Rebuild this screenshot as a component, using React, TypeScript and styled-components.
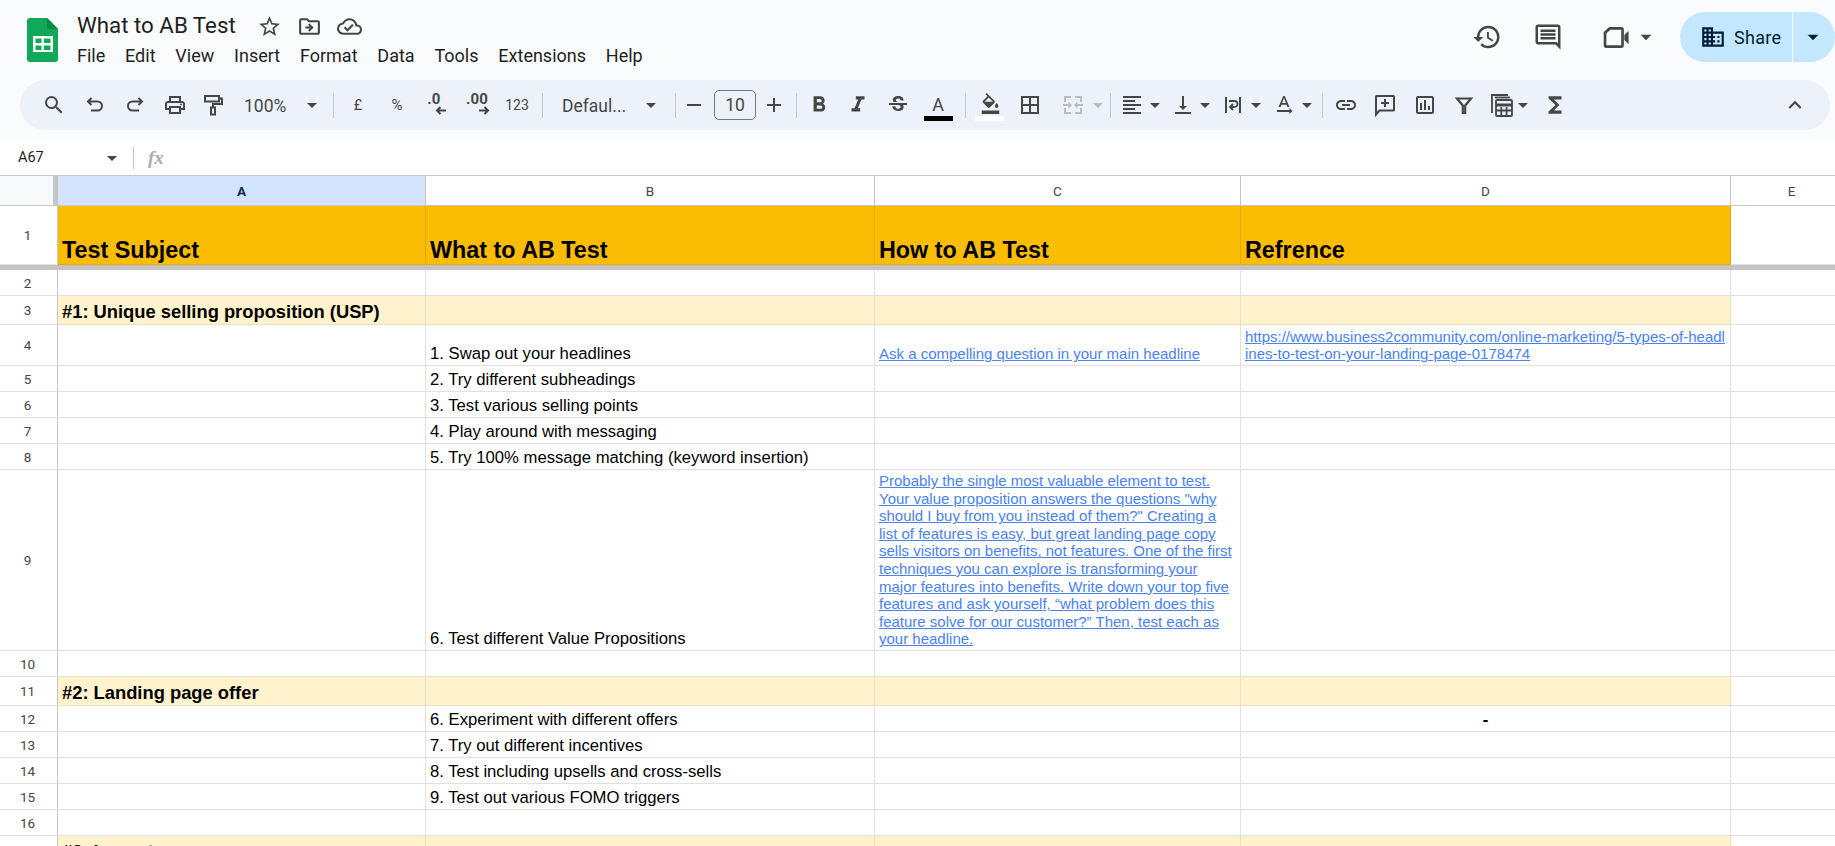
import React from "react";
import styled, { createGlobalStyle } from "styled-components";
import {
  MdSearch, MdOutlinePrint, MdArrowDropDown, MdRemove, MdAdd,
  MdFormatBold, MdFormatItalic, MdStrikethroughS, MdFormatColorFill, MdBorderAll, MdFormatAlignLeft,
  MdVerticalAlignBottom, MdTextRotationNone, MdLink, MdOutlineInsertChart, MdFunctions, MdKeyboardArrowUp,
  MdHistory, MdOutlineComment, MdDomain, MdStarBorder, MdOutlineDriveFileMove, MdOutlineCloudDone,
} from "react-icons/md";

const GlobalStyle = createGlobalStyle`
  html, body { margin: 0; padding: 0; height: 846px; overflow: hidden; background: #fff; }
  * { box-sizing: border-box; }
  body { font-family: Roboto, "Liberation Sans", sans-serif; }
`;

const Page = styled.div`
  width: 1835px;
  height: 846px;
  overflow: hidden;
  display: flex;
  flex-direction: column;
`;

/* ---------- header ---------- */
const Header = styled.header`
  height: 80px;
  flex: none;
  background: #f9fbfd;
  display: flex;
  padding-left: 27px;
`;
const LogoBox = styled.div`
  margin-top: 18px;
  margin-right: 19px;
  width: 31px;
  height: 44px;
`;
const TitleBlock = styled.div`
  padding-top: 10px;
  display: flex;
  flex-direction: column;
`;
const TitleRow = styled.div`
  height: 30px;
  display: flex;
  align-items: center;
`;
const Title = styled.div`
  font-size: 22.3px;
  color: #1f1f1f;
  width: 172px;
`;
const TitleIcon = styled.span`
  width: 40px;
  margin-top: 3px;
  display: flex;
  justify-content: center;
  color: #444746;
  font-size: 25px;
`;
const MenuRow = styled.nav`
  height: 30px;
  display: flex;
  align-items: center;
  gap: 19.8px;
  font-size: 18px;
  color: #1f1f1f;
`;
const Actions = styled.div`
  margin-left: auto;
  margin-top: 12px;
  height: 50px;
  display: flex;
  align-items: center;
`;
const ActionIcon = styled.span<{ $w: number; $ml: number; $size: number }>`
  width: ${(p) => p.$w}px;
  margin-left: ${(p) => p.$ml}px;
  display: flex;
  justify-content: center;
  color: #444746;
  font-size: ${(p) => p.$size}px;
  & > svg { flex: none; }
`;
const SharePill = styled.div`
  margin-left: 26px;
  width: 155px;
  height: 50px;
  border-radius: 25px;
  background: #c2e7ff;
  display: flex;
  color: #001d35;
  overflow: hidden;
`;
const SharePrimary = styled.div`
  width: 113px;
  padding-left: 20px;
  display: flex;
  align-items: center;
  gap: 8px;
  font-size: 18px;
  letter-spacing: 0.3px;
  border-right: 1px solid #f9fbfd;
`;
const ShareCaret = styled.div`
  flex: 1;
  display: flex;
  align-items: center;
  justify-content: center;
  padding-right: 2px;
  font-size: 26px;
`;

/* ---------- toolbar ---------- */
const ToolbarWrap = styled.div`
  height: 60px;
  flex: none;
  background: #f9fbfd;
  padding: 0 5px 10px 20px;
`;
const Toolbar = styled.div`
  height: 50px;
  background: #edf2fa;
  border-radius: 25px;
  display: flex;
  align-items: center;
  padding-left: 13px;
  color: #444746;
`;
const Tool = styled.span<{ $w: number; $ml?: number; $size?: number; $off?: boolean }>`
  flex: none;
  width: ${(p) => p.$w}px;
  margin-left: ${(p) => p.$ml ?? 0}px;
  height: 30px;
  display: flex;
  align-items: center;
  justify-content: center;
  font-size: ${(p) => p.$size ?? 24}px;
  color: ${(p) => (p.$off ? "#b9bdc1" : "#444746")};
  & > svg { flex: none; }
`;
const Sep = styled.span<{ $l: number; $r?: number }>`
  flex: none;
  width: 1px;
  height: 25px;
  background: #c7c7c7;
  margin-left: ${(p) => p.$l}px;
  margin-right: ${(p) => p.$r ?? 0}px;
`;
const SelectTool = styled.span<{ $w: number; $pl: number; $text: number }>`
  flex: none;
  width: ${(p) => p.$w}px;
  padding-left: ${(p) => p.$pl}px;
  display: flex;
  align-items: center;
  font-size: 17.5px;
  & > b { font-weight: 400; flex: none; padding-top: 1px; width: ${(p) => p.$text}px; white-space: nowrap; }
  & > svg { font-size: 24px; flex: none; }
`;
const Decimal = styled.span<{ $w: number; $shift: number }>`
  flex: none;
  width: ${(p) => p.$w}px;
  height: 30px;
  display: flex;
  flex-direction: column;
  align-items: center;
  font-weight: 700;
  font-size: 15px;
  line-height: 15px;
  padding-top: 2px;
  letter-spacing: 0.2px;
  & > svg { margin-left: ${(p) => p.$shift}px; margin-top: -1px; }
`;
const FontSize = styled.span`
  flex: none;
  width: 42px;
  height: 30px;
  margin-left: 2px;
  border: 1px solid #747775;
  border-radius: 5px;
  display: flex;
  align-items: center;
  justify-content: center;
  font-size: 17.5px;
`;
const ColorTool = styled.span<{ $w: number; $bar: string }>`
  flex: none;
  width: ${(p) => p.$w}px;
  height: 32px;
  display: flex;
  flex-direction: column;
  align-items: center;
  justify-content: flex-end;
  &::after {
    content: "";
    flex: none;
    width: 29px;
    height: 5px;
    background: ${(p) => p.$bar};
    margin-top: 2px;
  }
`;
const ColorA = styled.span`
  font-size: 18px;
  line-height: 18px;
  height: 18px;
`;
const FillIcon = styled.span`
  height: 21px;
  font-size: 21px;
  margin-left: 2px;
  display: flex;
`;

/* ---------- formula bar ---------- */
const FormulaBar = styled.div`
  height: 35px;
  flex: none;
  background: #fff;
  display: flex;
  align-items: center;
  color: #1f1f1f;
`;
const NameBox = styled.div`
  width: 133px;
  padding-left: 18px;
  padding-right: 9px;
  display: flex;
  align-items: center;
  justify-content: space-between;
  font-size: 14.5px;
  color: #1f1f1f;
  & > svg { color: #444746; font-size: 24px; }
`;
const FormulaSep = styled.span`
  width: 1px;
  height: 22px;
  background: #c7c7c7;
`;
const Fx = styled.span`
  margin-left: 14px;
  font-family: "Liberation Serif", serif;
  font-style: italic;
  font-weight: 700;
  font-size: 19px;
  color: #a9acb0;
`;

/* ---------- sheet ---------- */
const Sheet = styled.div`
  flex: 1;
  overflow: hidden;
  border-top: 1px solid #c4c7c5;
  background: #fff;
  font-family: "Liberation Sans", Arial, sans-serif;
  color: #000;
`;
const Row = styled.div<{ $h: number }>`
  display: grid;
  grid-template-columns: 58px 368px 449px 366px 490px 122px;
  height: ${(p) => p.$h}px;
`;
const Corner = styled.div`
  background: #f8f9fa;
  border-right: 5px solid #c4c7c5;
  border-bottom: 1px solid #c4c7c5;
`;
const ColHead = styled.div<{ $on?: boolean }>`
  display: flex;
  align-items: center;
  justify-content: center;
  font-family: Roboto, sans-serif;
  font-size: 13.5px;
  font-weight: ${(p) => (p.$on ? 700 : 400)};
  color: ${(p) => (p.$on ? "#0b2a5e" : "#444746")};
  background: ${(p) => (p.$on ? "#d3e3fd" : "#fff")};
  border-right: 1px solid #c4c7c5;
  border-bottom: 1px solid #c4c7c5;
`;
const RowHead = styled.div`
  display: flex;
  align-items: center;
  justify-content: center;
  font-family: Roboto, sans-serif;
  font-size: 13.5px;
  color: #444746;
  border-right: 1px solid #c4c7c5;
  border-bottom: 1px solid #e1e1e1;
  padding-right: 2px;
`;
const Cell = styled.div<{ $kind?: "head" | "section" }>`
  display: flex;
  align-items: flex-end;
  min-width: 0;
  white-space: nowrap;
  padding: 0 4px ${(p) => (p.$kind === "section" ? 3 : p.$kind === "head" ? 1 : 2)}px 4px;
  font-size: ${(p) => (p.$kind === "head" ? 23.33 : p.$kind === "section" ? 18.33 : 16.67)}px;
  font-weight: ${(p) => (p.$kind ? 700 : 400)};
  line-height: ${(p) => (p.$kind === "head" ? 26 : 19)}px;
  background: ${(p) => (p.$kind === "head" ? "#fbbc04" : p.$kind === "section" ? "#fff2cc" : "#fff")};
  border-right: 1px solid ${(p) => (p.$kind === "head" ? "#e3aa0c" : p.$kind === "section" ? "#ecdfba" : "#e1e1e1")};
  border-bottom: 1px solid ${(p) => (p.$kind === "head" ? "#e3aa0c" : p.$kind === "section" ? "#ecdfba" : "#e1e1e1")};
`;
const CellText = styled.div``;
const Center = styled.div`
  width: 100%;
  text-align: center;
  font-weight: 700;
`;
const LinkText = styled.a`
  color: #4a82f0;
  text-decoration: underline;
  white-space: pre-line;
  display: block;
  font-size: 15px;
  line-height: 17.6px;
`;
const FreezeBar = styled.div`
  height: 5px;
  background: #c4c4c4;
`;

/* ---------- inline drawings ---------- */
const Logo = () => (
  <svg width="31" height="44" viewBox="0 0 31 44">
    <path d="M3 0H20L31 11V41a3 3 0 0 1-3 3H3a3 3 0 0 1-3-3V3a3 3 0 0 1 3-3z" fill="#0fa958" />
    <path d="M20 0L31 11H22a2 2 0 0 1-2-2z" fill="#0b8a48" />
    <path d="M6 18h20v16H6z" fill="#fff" />
    <path d="M8.500 20.500h6v4.500h-6zM17 20.500h6.500v4.500H17zM8.500 27.500h6V32h-6zM17 27.500h6.500V32H17z" fill="#0fa958" />
  </svg>
);
const Arrow = ({ dir }: { dir: "left" | "right" }) => (
  <svg width="11" height="9" viewBox="0 0 11 9" fill="none" stroke="#444746" strokeWidth="2">
    {dir === "left" ? <path d="M11 4.500H2M5.500 1L2 4.500 5.500 8" /> : <path d="M0 4.500h9M5.500 1L9 4.500 5.500 8" />}
  </svg>
);
const UndoIcon = () => (
  <svg width="24" height="24" viewBox="0 0 24 24" fill="none" stroke="currentColor" strokeWidth="2">
    <path d="M8.500 5L5 8.500 8.500 12" />
    <path d="M5 8.500h9.500a4.500 4.500 0 0 1 0 9H8" />
  </svg>
);
const RedoIcon = () => (
  <svg width="24" height="24" viewBox="0 0 24 24" fill="none" stroke="currentColor" strokeWidth="2">
    <path d="M15.500 5L19 8.500 15.500 12" />
    <path d="M19 8.500H9.500a4.500 4.500 0 0 0 0 9H16" />
  </svg>
);
const RollerIcon = () => (
  <svg width="24" height="24" viewBox="0 0 24 24" fill="none" stroke="currentColor" strokeWidth="2">
    <path d="M4 3h14v5.500H4z" />
    <path d="M18 5.500h3V11h-9v3.500" />
    <rect x="10" y="14.500" width="4" height="7" />
  </svg>
);
const VideoIcon = () => (
  <svg width="29" height="29" viewBox="0 0 24 24" fill="none" stroke="currentColor" strokeWidth="2.200">
    <path d="M6.500 4.500H16a1 1 0 0 1 1 1v13a1 1 0 0 1-1 1H3.500a1 1 0 0 1-1-1V8z" />
    <path d="M18.500 10l3.500-3.500v11L18.500 14z" fill="currentColor" stroke="none" />
  </svg>
);
const MergeIcon = () => (
  <svg width="24" height="24" viewBox="0 0 24 24" fill="currentColor">
    <path d="M3 3h7v2H5v4H3zM14 3h7v6h-2V5h-5zM3 15h2v4h5v2H3zM19 15h2v6h-7v-2h5z" />
    <path d="M2 11h5.500V8.500L11 12l-3.500 3.500V13H2zM22 11h-5.500V8.500L13 12l3.500 3.500V13H22z" />
  </svg>
);
const WrapIcon = () => (
  <svg width="24" height="24" viewBox="0 0 24 24" fill="none" stroke="currentColor" strokeWidth="2">
    <path d="M5 4v16M19 4v16" />
    <path d="M8 8h5.500a3 3 0 0 1 0 6H10" strokeWidth="1.800" />
    <path d="M12 11l-3 3 3 3" strokeWidth="1.800" />
  </svg>
);
const AddCommentIcon = () => (
  <svg width="24" height="24" viewBox="0 0 24 24" fill="none" stroke="currentColor" strokeWidth="2">
    <path d="M3.500 3h17a.5.500 0 0 1 .5.500V17a.5.500 0 0 1-.5.500H6.500L3 21.500V3.500a.5.500 0 0 1 .5-.5z" />
    <path d="M12 6v8M8 10h8" />
  </svg>
);
const FilterIcon = () => (
  <svg width="24" height="24" viewBox="0 0 24 24" fill="none" stroke="currentColor" strokeWidth="2.200">
    <path d="M5 5.500h14l-5.800 7V20h-2.400v-7.500z" />
  </svg>
);
const CalcIcon = () => (
  <svg width="26" height="26" viewBox="0 0 26 26" fill="none" stroke="currentColor" strokeWidth="1.800">
    <path d="M3 21V3h16" />
    <path d="M6 5.500h15" />
    <rect x="7" y="8" width="16" height="16" rx="1" />
    <path d="M7 13h16" strokeWidth="3" />
    <path d="M7 18.500h16M12.300 15v9M17.600 15v9" />
  </svg>
);

/* ---------- data ---------- */
type RowData = {
  n: string;
  h: number;
  kind?: "head" | "section";
  a?: string;
  b?: string;
  c?: string;
  d?: string;
  dash?: boolean;
};

const longC =
  'Probably the single most valuable element to test.\nYour value proposition answers the questions "why\nshould I buy from you instead of them?" Creating a\nlist of features is easy, but great landing page copy\nsells visitors on benefits, not features. One of the first\ntechniques you can explore is transforming your\nmajor features into benefits. Write down your top five\nfeatures and ask yourself, \u201cwhat problem does this\nfeature solve for our customer?\u201d Then, test each as\nyour headline.';

const rows: RowData[] = [
  { n: "2", h: 26 },
  { n: "3", h: 29, kind: "section", a: "#1: Unique selling proposition (USP)" },
  {
    n: "4",
    h: 41,
    b: "1. Swap out your headlines",
    c: "Ask a compelling question in your main headline",
    d: "https://www.business2community.com/online-marketing/5-types-of-headl\nines-to-test-on-your-landing-page-0178474",
  },
  { n: "5", h: 26, b: "2. Try different subheadings" },
  { n: "6", h: 26, b: "3. Test various selling points" },
  { n: "7", h: 26, b: "4. Play around with messaging" },
  { n: "8", h: 26, b: "5. Try 100% message matching (keyword insertion)" },
  { n: "9", h: 181, b: "6. Test different Value Propositions", c: longC },
  { n: "10", h: 26 },
  { n: "11", h: 29, kind: "section", a: "#2: Landing page offer" },
  { n: "12", h: 26, b: "6. Experiment with different offers", dash: true },
  { n: "13", h: 26, b: "7. Try out different incentives" },
  { n: "14", h: 26, b: "8. Test including upsells and cross-sells" },
  { n: "15", h: 26, b: "9. Test out various FOMO triggers" },
  { n: "16", h: 26 },
  { n: "17", h: 29, kind: "section", a: "#3: Layout" },
];

const menu = ["File", "Edit", "View", "Insert", "Format", "Data", "Tools", "Extensions", "Help"];
const headers = ["Test Subject", "What to AB Test", "How to AB Test", "Refrence"];

export default function App() {
  return (
    <Page>
      <GlobalStyle />
      <Header>
        <LogoBox>
          <Logo />
        </LogoBox>
        <TitleBlock>
          <TitleRow>
            <Title>What to AB Test</Title>
            <TitleIcon><MdStarBorder /></TitleIcon>
            <TitleIcon><MdOutlineDriveFileMove /></TitleIcon>
            <TitleIcon><MdOutlineCloudDone /></TitleIcon>
          </TitleRow>
          <MenuRow>
            {menu.map((m) => (
              <span key={m}>{m}</span>
            ))}
          </MenuRow>
        </TitleBlock>
        <Actions>
          <ActionIcon $w={30} $ml={0} $size={30}><MdHistory /></ActionIcon>
          <ActionIcon $w={30} $ml={31} $size={30}><MdOutlineComment /></ActionIcon>
          <ActionIcon $w={32} $ml={37} $size={29}><VideoIcon /></ActionIcon>
          <ActionIcon $w={16} $ml={6} $size={26}><MdArrowDropDown /></ActionIcon>
          <SharePill>
            <SharePrimary>
              <MdDomain size={26} />
              Share
            </SharePrimary>
            <ShareCaret><MdArrowDropDown /></ShareCaret>
          </SharePill>
        </Actions>
      </Header>

      <ToolbarWrap>
        <Toolbar>
          <Tool $w={41}><MdSearch /></Tool>
          <Tool $w={41}><UndoIcon /></Tool>
          <Tool $w={40}><RedoIcon /></Tool>
          <Tool $w={39}><MdOutlinePrint /></Tool>
          <Tool $w={38}><RollerIcon /></Tool>
          <SelectTool $w={93} $pl={12} $text={56}><b>100%</b><MdArrowDropDown /></SelectTool>
          <Sep $l={8} $r={8} />
          <Tool $w={32} $size={14.5}>£</Tool>
          <Tool $w={46} $size={15}>%</Tool>
          <Decimal $w={28} $shift={12}>.0<Arrow dir="left" /></Decimal>
          <Decimal $w={58} $shift={14}>.00<Arrow dir="right" /></Decimal>
          <Tool $w={22} $size={14}>123</Tool>
          <Sep $l={14} />
          <SelectTool $w={132} $pl={19} $text={77}><b>Defaul...</b><MdArrowDropDown /></SelectTool>
          <Sep $l={0} />
          <Tool $w={36}><MdRemove /></Tool>
          <FontSize>10</FontSize>
          <Tool $w={36}><MdAdd /></Tool>
          <Sep $l={4} />
          <Tool $w={44}><MdFormatBold size={26} /></Tool>
          <Tool $w={34}><MdFormatItalic size={26} /></Tool>
          <Tool $w={46}><MdStrikethroughS /></Tool>
          <ColorTool $w={34} $bar="#000"><ColorA>A</ColorA></ColorTool>
          <Sep $l={10} />
          <ColorTool $w={46} $bar="#fff"><FillIcon><MdFormatColorFill /></FillIcon></ColorTool>
          <Tool $w={36}><MdBorderAll /></Tool>
          <Tool $w={34} $ml={8} $off><MergeIcon /></Tool>
          <Tool $w={16} $off><MdArrowDropDown /></Tool>
          <Sep $l={4} />
          <Tool $w={24} $ml={9}><MdFormatAlignLeft /></Tool>
          <Tool $w={16} $ml={3}><MdArrowDropDown /></Tool>
          <Tool $w={24} $ml={8}><MdVerticalAlignBottom /></Tool>
          <Tool $w={16} $ml={2}><MdArrowDropDown /></Tool>
          <Tool $w={24} $ml={8}><WrapIcon /></Tool>
          <Tool $w={16} $ml={3}><MdArrowDropDown /></Tool>
          <Tool $w={24} $ml={8}><MdTextRotationNone /></Tool>
          <Tool $w={16} $ml={3}><MdArrowDropDown /></Tool>
          <Sep $l={7} />
          <Tool $w={46}><MdLink /></Tool>
          <Tool $w={32}><AddCommentIcon /></Tool>
          <Tool $w={48}><MdOutlineInsertChart /></Tool>
          <Tool $w={30}><FilterIcon /></Tool>
          <Tool $w={24} $ml={11}><CalcIcon /></Tool>
          <Tool $w={16} $ml={1}><MdArrowDropDown /></Tool>
          <Tool $w={24} $ml={12} $size={26}><MdFunctions /></Tool>
          <Tool $w={24} $ml={216} $size={26}><MdKeyboardArrowUp /></Tool>
        </Toolbar>
      </ToolbarWrap>

      <FormulaBar>
        <NameBox>A67<MdArrowDropDown /></NameBox>
        <FormulaSep />
        <Fx>fx</Fx>
      </FormulaBar>

      <Sheet>
        <Row $h={30}>
          <Corner />
          <ColHead $on>A</ColHead>
          <ColHead>B</ColHead>
          <ColHead>C</ColHead>
          <ColHead>D</ColHead>
          <ColHead>E</ColHead>
        </Row>
        <Row $h={59}>
          <RowHead>1</RowHead>
          {headers.map((h) => (
            <Cell key={h} $kind="head"><CellText>{h}</CellText></Cell>
          ))}
          <Cell />
        </Row>
        <FreezeBar />
        {rows.map((r) => (
          <Row key={r.n} $h={r.h}>
            <RowHead>{r.n}</RowHead>
            <Cell $kind={r.kind}>{r.a && <CellText>{r.a}</CellText>}</Cell>
            <Cell $kind={r.kind}>{r.b && <CellText>{r.b}</CellText>}</Cell>
            <Cell $kind={r.kind}>{r.c && <LinkText>{r.c}</LinkText>}</Cell>
            <Cell $kind={r.kind}>
              {r.d && <LinkText>{r.d}</LinkText>}
              {r.dash && <Center>-</Center>}
            </Cell>
            <Cell />
          </Row>
        ))}
      </Sheet>
    </Page>
  );
}
